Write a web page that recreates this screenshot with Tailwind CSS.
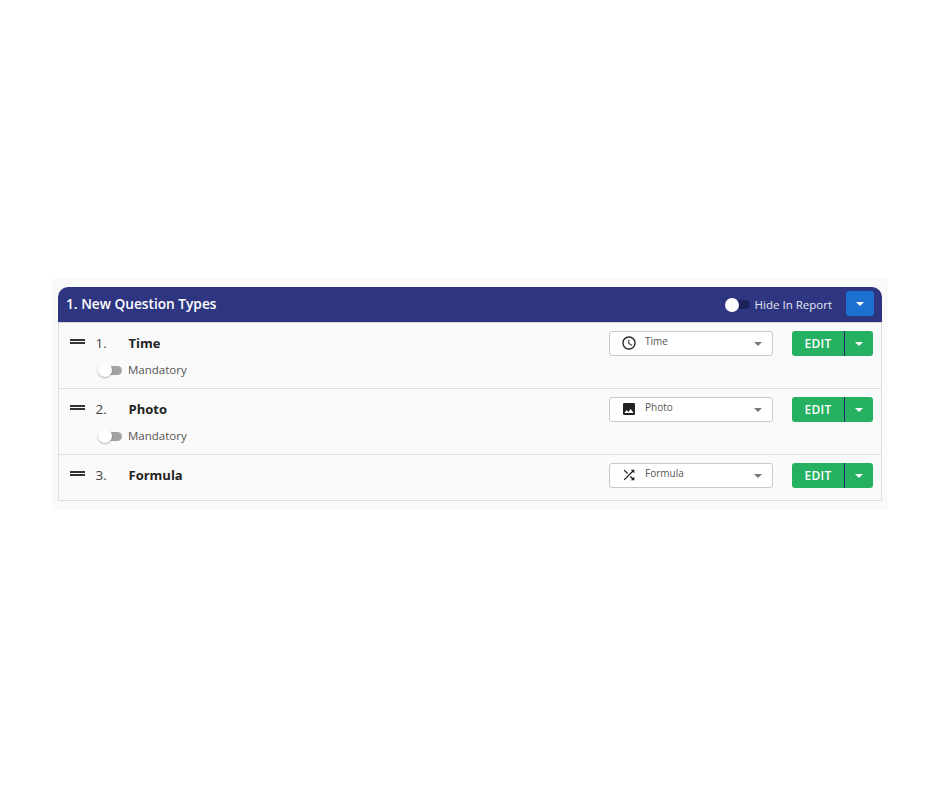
<!DOCTYPE html>
<html><head><meta charset="utf-8"><script src="https://cdn.jsdelivr.net/npm/@tailwindcss/browser@4"></script></head>
<body class="bg-white font-['Open_Sans',sans-serif] h-[788px] overflow-hidden">
<div class="pt-[278px] pl-[52px]">
<div class="w-[836px] h-[232px] bg-[#fafafa] pt-[9px] px-[6px]">
  <div class="flex items-center h-[36px] bg-[#2e3581] rounded-t-[10px] border-b border-[#d8d9e2] pl-[9px] pr-[8px]">
    <span class="text-[13.7px] font-semibold text-white leading-none flex-1 -ml-px -mt-[2px]">1. New Question Types</span>
    <span class="relative w-[24px] h-[9px] rounded-full bg-[#1d2157] mr-[5px]"><span class="absolute -left-[1px] -top-[2.5px] w-[14px] h-[14px] rounded-full bg-white"></span></span>
    <span class="text-[11.5px] text-[#e4e5f0] mr-[14px] leading-none">Hide In Report</span>
    <span class="flex items-center justify-center w-[28px] h-[25px] -mt-[2px] rounded-[3px] bg-[#1b70d0]"><span class="w-0 h-0 border-x-[4.5px] border-x-transparent border-t-[4.5px] border-t-white"></span></span>
  </div>
  <div class="border-x border-b border-[#dddddd]">
    <!-- row 1 -->
    <div class="h-[66px] border-b border-[#dddddd] pl-[11px] pr-[8px] pt-[8px]">
      <div class="flex items-start">
        <span class="flex flex-col gap-[1px] w-[15px] mt-[8px]"><span class="h-[2px] bg-[#333]"></span><span class="h-[2px] bg-[#333]"></span></span>
        <span class="w-[33px] ml-[10.5px] text-[13.5px] text-[#444] leading-[24px]">1.</span>
        <span class="text-[13px] font-bold text-[#222] leading-[24px] flex-1">Time</span>
        <span class="flex w-[164px] h-[25px] bg-white border border-[#c9c9c9] rounded-[3px] mr-[19px] relative">
          <svg class="absolute left-[11px] top-[3px]" width="16" height="16" viewBox="0 0 24 24" fill="#222"><path d="M11.99 2C6.47 2 2 6.48 2 12s4.47 10 9.99 10C17.52 22 22 17.52 22 12S17.52 2 11.99 2zM12 20c-4.42 0-8-3.58-8-8s3.58-8 8-8 8 3.58 8 8-3.58 8-8 8zm.5-13H11v6l5.25 3.15.75-1.23-4.5-2.67z"/></svg>
          <span class="absolute left-[35px] top-[2px] text-[10px] leading-[14px] text-[#555]">Time</span>
          <span class="absolute right-[10px] top-[10px] w-0 h-0 border-x-[4.5px] border-x-transparent border-t-[4.5px] border-t-[#777]"></span>
        </span>
        <span class="flex w-[81px] h-[25px] rounded-[3px] bg-[#26b061] text-white">
          <span class="w-[52px] text-center text-[12px] font-semibold tracking-[0.3px] leading-[25px]">EDIT</span>
          <span class="w-px bg-[#1d2a6b]"></span>
          <span class="flex-1 flex items-center justify-center"><span class="w-0 h-0 border-x-[4.5px] border-x-transparent border-t-[4.5px] border-t-white"></span></span>
        </span>
      </div>
      <div class="flex items-center mt-[4px] ml-[29px]">
        <span class="relative w-[23px] h-[9px] rounded-full bg-[#a3a3a3] mr-[6px]"><span class="absolute -left-[1px] -top-[2.5px] w-[14px] h-[14px] rounded-full bg-white shadow-[0_1px_2px_rgba(0,0,0,0.3)]"></span></span>
        <span class="text-[11.5px] text-[#555] leading-[20px]">Mandatory</span>
      </div>
    </div>
    <!-- row 2 -->
    <div class="h-[66px] border-b border-[#dddddd] pl-[11px] pr-[8px] pt-[8px]">
      <div class="flex items-start">
        <span class="flex flex-col gap-[1px] w-[15px] mt-[8px]"><span class="h-[2px] bg-[#333]"></span><span class="h-[2px] bg-[#333]"></span></span>
        <span class="w-[33px] ml-[10.5px] text-[13.5px] text-[#444] leading-[24px]">2.</span>
        <span class="text-[13px] font-bold text-[#222] leading-[24px] flex-1">Photo</span>
        <span class="flex w-[164px] h-[25px] bg-white border border-[#c9c9c9] rounded-[3px] mr-[19px] relative">
          <svg class="absolute left-[11px] top-[3px]" width="16" height="16" viewBox="0 0 24 24" fill="#222"><path d="M21 19V5c0-1.1-.9-2-2-2H5c-1.1 0-2 .9-2 2v14c0 1.1.9 2 2 2h14c1.1 0 2-.9 2-2zM8.5 13.5l2.5 3.01L14.5 12l4.5 6H5l3.5-4.5z"/></svg>
          <span class="absolute left-[35px] top-[2px] text-[10px] leading-[14px] text-[#555]">Photo</span>
          <span class="absolute right-[10px] top-[10px] w-0 h-0 border-x-[4.5px] border-x-transparent border-t-[4.5px] border-t-[#777]"></span>
        </span>
        <span class="flex w-[81px] h-[25px] rounded-[3px] bg-[#26b061] text-white">
          <span class="w-[52px] text-center text-[12px] font-semibold tracking-[0.3px] leading-[25px]">EDIT</span>
          <span class="w-px bg-[#1d2a6b]"></span>
          <span class="flex-1 flex items-center justify-center"><span class="w-0 h-0 border-x-[4.5px] border-x-transparent border-t-[4.5px] border-t-white"></span></span>
        </span>
      </div>
      <div class="flex items-center mt-[4px] ml-[29px]">
        <span class="relative w-[23px] h-[9px] rounded-full bg-[#a3a3a3] mr-[6px]"><span class="absolute -left-[1px] -top-[2.5px] w-[14px] h-[14px] rounded-full bg-white shadow-[0_1px_2px_rgba(0,0,0,0.3)]"></span></span>
        <span class="text-[11.5px] text-[#555] leading-[20px]">Mandatory</span>
      </div>
    </div>
    <!-- row 3 -->
    <div class="h-[45px] pl-[11px] pr-[8px] pt-[8px]">
      <div class="flex items-start">
        <span class="flex flex-col gap-[1px] w-[15px] mt-[8px]"><span class="h-[2px] bg-[#333]"></span><span class="h-[2px] bg-[#333]"></span></span>
        <span class="w-[33px] ml-[10.5px] text-[13.5px] text-[#444] leading-[24px]">3.</span>
        <span class="text-[13px] font-bold text-[#222] leading-[24px] flex-1">Formula</span>
        <span class="flex w-[164px] h-[25px] bg-white border border-[#c9c9c9] rounded-[3px] mr-[19px] relative">
          <svg class="absolute left-[11px] top-[3px]" width="16" height="16" viewBox="0 0 24 24" fill="#222"><path d="M10.59 9.17L5.41 4 4 5.41l5.17 5.17 1.42-1.41zM14.5 4l2.04 2.04L4 18.59 5.41 20 17.96 7.46 20 9.5V4h-5.5zm.33 9.41l-1.41 1.41 3.13 3.13L14.5 20H20v-5.5l-2.04 2.04-3.13-3.13z"/></svg>
          <span class="absolute left-[35px] top-[2px] text-[10px] leading-[14px] text-[#555]">Formula</span>
          <span class="absolute right-[10px] top-[10px] w-0 h-0 border-x-[4.5px] border-x-transparent border-t-[4.5px] border-t-[#777]"></span>
        </span>
        <span class="flex w-[81px] h-[25px] rounded-[3px] bg-[#26b061] text-white">
          <span class="w-[52px] text-center text-[12px] font-semibold tracking-[0.3px] leading-[25px]">EDIT</span>
          <span class="w-px bg-[#1d2a6b]"></span>
          <span class="flex-1 flex items-center justify-center"><span class="w-0 h-0 border-x-[4.5px] border-x-transparent border-t-[4.5px] border-t-white"></span></span>
        </span>
      </div>
    </div>
  </div>
</div>
</div>
</body></html>
